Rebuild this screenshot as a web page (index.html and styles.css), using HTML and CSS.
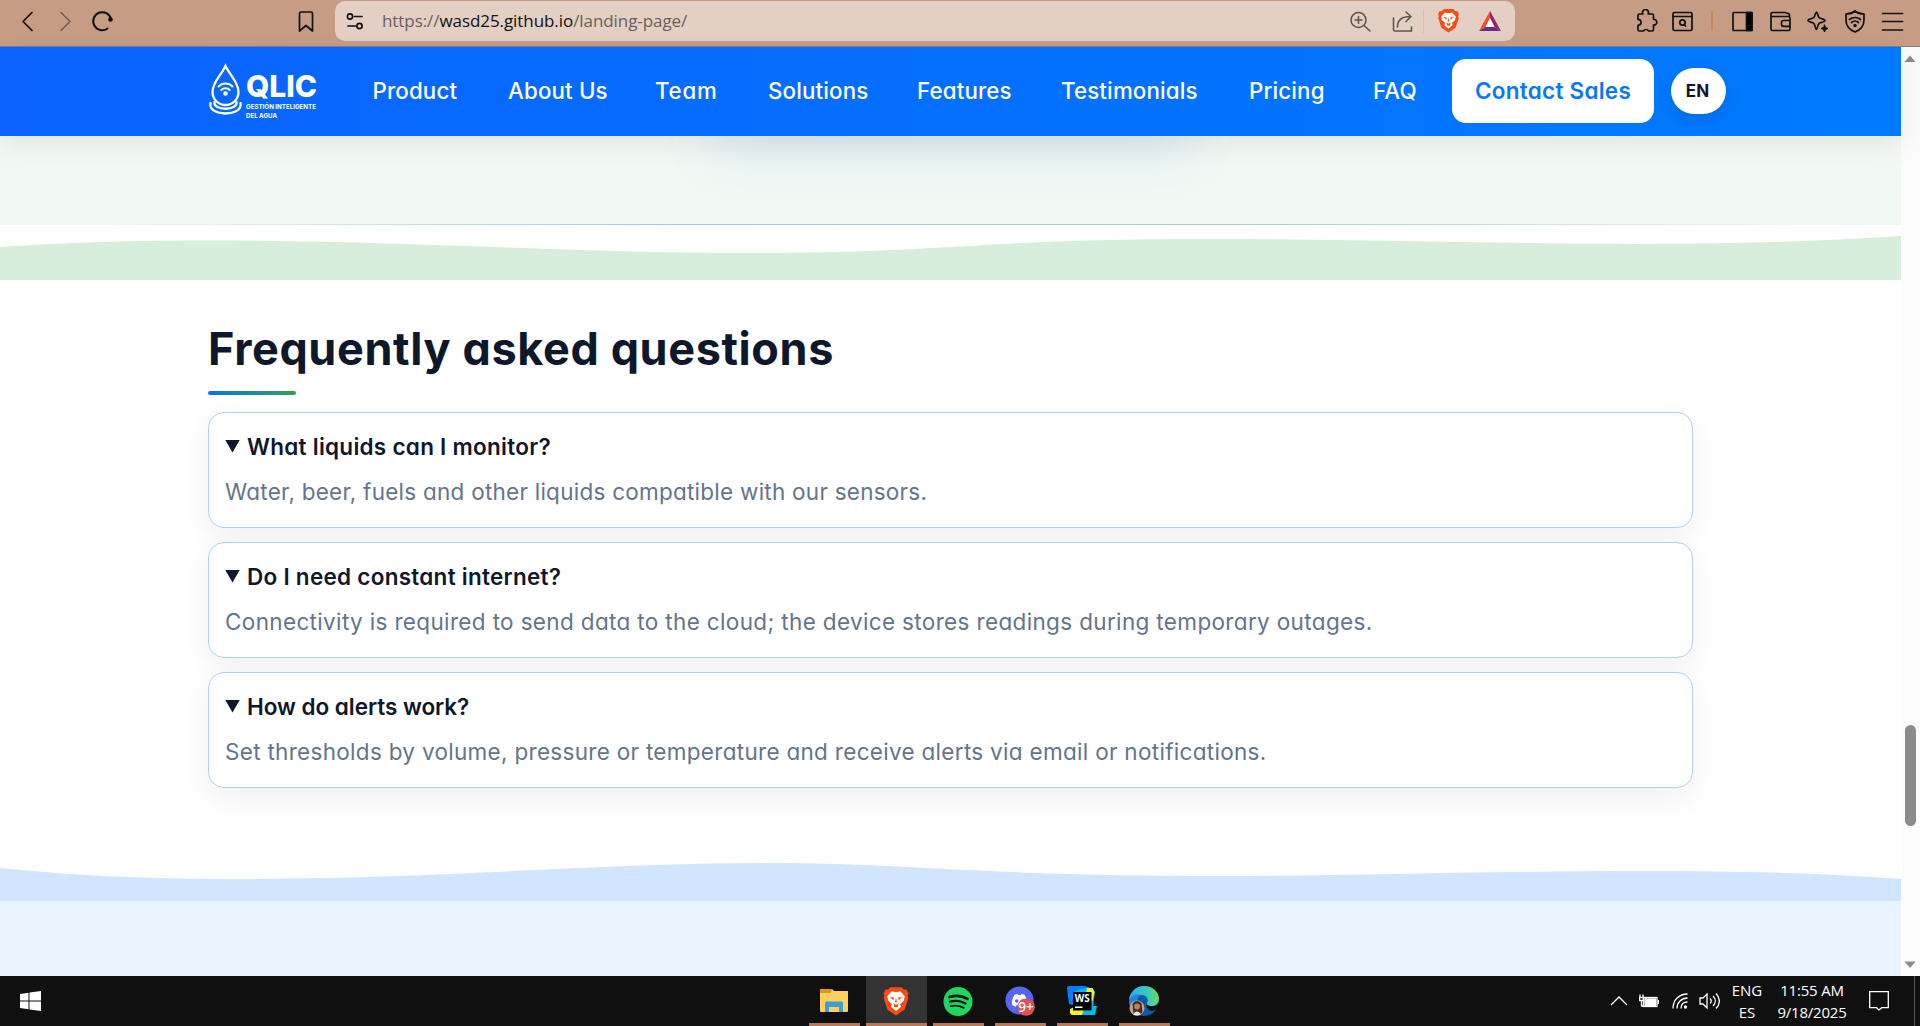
FILE: index.html
```html
<!DOCTYPE html>
<html lang="en">
<head>
<meta charset="utf-8">
<title>QLIC</title>
<link rel="stylesheet" href="styles.css">
</head>
<body>
<div class="toolbar">
  <svg class="ico back" viewBox="0 0 24 24"><path d="M17 3.500 8 12.500l9 9"/></svg>
  <svg class="ico forward" viewBox="0 0 24 24"><path d="m8 3.500 9 9-9 9"/></svg>
  <svg class="ico reload" viewBox="0 0 24 24"><path d="M17.500 19.500A9 9 0 1 1 21 10"/><circle cx="20.500" cy="10.500" r="2.300" fill="#111" stroke="none"/></svg>
  <svg class="ico bookmark" viewBox="0 0 24 24"><path d="M5.500 4.500a1.500 1.500 0 0 1 1.500-1.500h10a1.500 1.500 0 0 1 1.500 1.500V22L12 16.500 5.500 22z"/></svg>
  <div class="url">
    <svg class="ico tune" viewBox="0 0 24 24"><circle cx="7" cy="7.500" r="2.600"/><path d="M11.500 7.500H19M5 17h7.500"/><circle cx="16.500" cy="17" r="2.600"/></svg>
    <span class="address">https://<b>wasd25.github.io</b>/landing-page/</span>
    <svg class="ico soft zoom" viewBox="0 0 24 24"><circle cx="10.500" cy="11" r="7.500"/><path d="m16 16.500 6 5.500M7 11h7M10.500 7.500v7"/></svg>
    <svg class="ico soft share" viewBox="0 0 24 24"><path d="M3.500 9v11.500a1.500 1.500 0 0 0 1.500 1.500h16.500v-4M7.500 18c0-7 4-10.500 13-10.500M16 3l5 4.500-5 5"/></svg>
    <i class="bar"></i>
    <svg class="ico lion" viewBox="0 0 24 24"><use href="#brave"/></svg>
    <svg class="ico bat" viewBox="0 0 24 24"><path d="M12 2 1 22l6.500-4L12 9z" fill="#ff4724" stroke="none"/><path d="m12 2 11 20-6.500-4L12 9z" fill="#9e1f63" stroke="none"/><path d="M1 22h22l-6.500-4h-9z" fill="#662d91" stroke="none"/><path d="m12 9 4.500 9h-9z" fill="#fff" stroke="none"/></svg>
  </div>
  <div class="tools">
    <svg class="ico" viewBox="0 0 24 24"><path d="M4 6.500A1.500 1.500 0 0 1 5.500 5h3.400a3 3 0 1 1 5.200 0h3.900a1.500 1.500 0 0 1 1.500 1.500v4a2.800 2.800 0 1 1 0 5.500v4.500A1.500 1.500 0 0 1 18 22h-3.400a3 3 0 0 0-5.200 0H5.500A1.500 1.500 0 0 1 4 20.500V16.300a2.900 2.900 0 0 0 0-6z"/></svg>
    <svg class="ico" viewBox="0 0 24 24"><rect x="3" y="3.500" width="19" height="18" rx="1.500"/><path d="M3 7.500h19M15.500 17l-1.500-1.500"/><circle cx="12.500" cy="13.500" r="2.700"/></svg>
    <i class="divider"></i>
    <svg class="ico panel" viewBox="0 0 24 24"><rect x="3" y="3.500" width="19" height="18" rx="1"/><path d="M16.500 3.500H22v18h-5.500z" fill="#000"/></svg>
    <svg class="ico wallet" viewBox="0 0 24 24"><path d="M21.500 7.500V6a1.500 1.500 0 0 0-.7-1.200L17 3.500H4.500A1.500 1.500 0 0 0 3 5v15a1.500 1.500 0 0 0 1.500 1.500H20.500A1.500 1.500 0 0 0 22 20V9a1.500 1.500 0 0 0-1.500-1.500H3M22 11.500h-6.500a2 2 0 0 0-2 2v1.800a2 2 0 0 0 2 2H22"/></svg>
    <svg class="ico spark" viewBox="0 0 24 24"><path d="M11.500 3c1 0 1.200 4 2.500 5.500s6 1.500 6 3-4.500 1.700-6 3-1.500 6-2.500 6-1.300-4.500-2.600-6-6-1.500-6-3 4.700-1.500 6-3S10.500 3 11.500 3z"/><path d="m19.500 16 1 2.500 2.500 1-2.500 1-1 2.500-1-2.500-2.500-1 2.500-1z" fill="#111" stroke-width="1"/></svg>
    <svg class="ico shield" viewBox="0 0 24 24"><path d="M12 2c3 2.500 6 3 9 3v6c0 6-4 10-9 12-5-2-9-6-9-12V5c3 0 6-.5 9-3zM6.500 10.500c3-2.700 8-2.700 11 0M8.500 13.500c2-1.800 5-1.800 7 0"/><circle cx="12" cy="16.500" r=".9" fill="#111"/></svg>
    <svg class="ico menu" viewBox="0 0 24 24"><path d="M2.500 4.500h20M2.500 12.500h20M2.500 21h20"/></svg>
  </div>
</div>

<div class="viewport">
<div class="page">
  <header class="site-header">
    <svg class="logo" viewBox="0 0 112 62">
      <g fill="none" stroke="#fff" stroke-width="2.300" stroke-linecap="round">
        <path d="M17.500 4C13 13.500 4.500 20 4.500 30a13 13 0 0 0 26 0C30.500 20 22 13.500 17.500 4z"/>
        <path d="M10.500 24.500c3.500-4 10.500-4 14 0M13.300 28c2.200-2.300 6.200-2.300 8.400 0" stroke-width="2"/>
        <path d="M6.500 40c-2 9 24 9 22 0"/>
        <path d="M2.500 41c-3 14 33 14 30 0"/>
      </g>
      <circle cx="17.500" cy="31.500" r="2.300" fill="#fff"/>
      <text class="logo-name" x="38" y="34.500" textLength="71" lengthAdjust="spacingAndGlyphs">QLIC</text>
      <text class="logo-tag" x="38" y="47" textLength="70" lengthAdjust="spacingAndGlyphs">GESTIÓN INTELIGENTE</text>
      <text class="logo-tag" x="38" y="56" textLength="31" lengthAdjust="spacingAndGlyphs">DEL AGUA</text>
    </svg>
    <nav class="nav">
      <a>Product</a>
      <a>About Us</a>
      <a class="wide">Team</a>
      <a>Solutions</a>
      <a>Features</a>
      <a>Testimonials</a>
      <a>Pricing</a>
      <a>FAQ</a>
    </nav>
    <a class="cta">Contact Sales</a>
    <button class="lang">EN</button>
  </header>

  <section class="previous"><div class="glow"></div></section>
  <svg class="wave wave-green" viewBox="0 225 1901 55" preserveAspectRatio="none"><path d="M0 247C80 241.500 150 240.500 210 240.500c210 0 350 12.500 540 12.500 90 0 150-3 210-6.500C1040 241 1130 239 1200 239c150 0 300 5 440 5 100 0 170-2.500 261-8v44H0z"/></svg>

  <section class="faq">
    <h2>Frequently asked questions</h2>
    <div class="cards">
      <article class="card">
        <h3>What liquids can I monitor?</h3>
        <p>Water, beer, fuels and other liquids compatible with our sensors.</p>
      </article>
      <article class="card">
        <h3>Do I need constant internet?</h3>
        <p>Connectivity is required to send data to the cloud; the device stores readings during temporary outages.</p>
      </article>
      <article class="card">
        <h3>How do alerts work?</h3>
        <p>Set thresholds by volume, pressure or temperature and receive alerts via email or notifications.</p>
      </article>
    </div>
  </section>

  <svg class="wave wave-blue" viewBox="0 861 1901 40" preserveAspectRatio="none"><path d="M0 868c70 7 140 11 230 11 220 0 360-16 541-16 140 0 200 13 454 13 130 0 270-5 416-5 100 0 180 2 260 8v22H0z"/></svg>
  <section class="next"></section>
</div>
<div class="scrollbar">
  <svg viewBox="0 0 19 930"><path d="M9 8.500 14.500 15h-11zM9 921l5.500-6.500h-11z"/><rect x="4" y="678" width="11" height="101" rx="5.500"/></svg>
</div>
</div>

<footer class="taskbar">
  <svg class="start" viewBox="0 0 21 20"><path d="M0 3l8.500-1.300v7.800H0zM9.500 1.500 21 0v9.500H9.500zM0 10.500h8.500v7.800L0 17zM9.500 10.500H21V20L9.500 18.500z"/></svg>
  <div class="apps">
    <div class="app"><svg viewBox="0 0 30 30"><path d="M1 3h12l2 2h14v20a1 1 0 0 1-1 1H2a1 1 0 0 1-1-1z" fill="#fbd05e"/><path d="M1 3h12.500l-2 4H1z" fill="#dd9c0c"/><path d="M6 26V17a1.500 1.500 0 0 1 1.500-1.500h15A1.500 1.500 0 0 1 24 17v9h-4v-5h-10v5z" fill="#3f9ad8"/></svg></div>
    <div class="app active"><svg viewBox="0 0 24 24"><use href="#brave"/></svg></div>
    <div class="app"><svg viewBox="0 0 30 30"><circle cx="15" cy="15.500" r="14.500" fill="#1ed760"/><g fill="none" stroke="#111" stroke-linecap="round"><path d="M6.500 11c6-1.800 13-1.200 18 1.800" stroke-width="2.700"/><path d="M7 15.700c5-1.400 11-.8 15.500 1.700" stroke-width="2.300"/><path d="M7.700 20.200c4.500-1.100 9-.6 13 1.600" stroke-width="1.900"/></g></svg></div>
    <div class="app"><svg viewBox="0 0 32 32"><circle cx="15.500" cy="15.500" r="15" fill="#5865f2"/><path d="M10 9.500c1.200-.7 2.500-1 3.500-1l.6 1.200h2.800l.6-1.200c1 0 2.500.3 3.500 1 2 3.500 3 7 2.500 10.500-1.500 1.300-3 1.800-4 2l-1-1.800h-6l-1 1.800c-1-.2-2.500-.7-4-2-.5-3.500.5-7 2.500-10.500z" fill="#fff"/><circle cx="12.500" cy="16" r="1.900" fill="#5865f2"/><circle cx="18.500" cy="16" r="1.900" fill="#5865f2"/><circle cx="22.500" cy="22.500" r="9.300" fill="#e2504f"/><text x="22.500" y="27.500" class="count">9+</text></svg></div>
    <div class="app"><svg viewBox="0 0 30 30"><path d="M0 2a2 2 0 0 1 2-2h16l8 3v16H6L2 18z" fill="#087cfa"/><path d="M17 2h8l3 4-2 14h4l-2 9H13L8 24V5z" fill="#00b8e8"/><path d="M20 2h5.500l2 4-2 9H18zM3 23l6-3h9l-3 9H5.500A2.500 2.500 0 0 1 3 27z" fill="#f5ee32"/><path d="M6 6h18.500v18.500H6z" fill="#000"/><text x="15.300" y="15.500" class="ws">WS</text><path d="M8 20.500h7.500V22H8z" fill="#fff"/></svg></div>
    <div class="app"><svg viewBox="0 0 30 30"><defs><linearGradient id="edge" x1="0" x2="1"><stop offset="0" stop-color="#2fa9e8"/><stop offset=".55" stop-color="#36c7c9"/><stop offset="1" stop-color="#68dc56"/></linearGradient></defs><circle cx="15" cy="15" r="15" fill="#0c5aa6"/><path d="M0 14C1 6 7 0 15 0c9 0 15 6.500 15 12.500 0 5-4 7.500-7.500 7.500-3 0-5.500-1-5-2.500 3-3.500.5-8.500-5-8.500C6 9 1 12 0 14z" fill="url(#edge)"/><path d="M0 15c1.500-5 7-7.500 12-6-4 2-4.500 7-3 11l-4 5.500C2 23 0 19 0 15z" fill="#1b86dc"/><path d="M17.500 17.500c0 2.500 6 4 11 1.500l1.500-3v6l-6 3c-5-.5-8-4.500-6.500-7.500z" fill="#101010"/><circle cx="8" cy="22" r="7.500" fill="#c0a58f"/><path d="M3.500 18a5 5 0 0 1 9-.5l1 8-2 3.500-7-.5z" fill="#4a2c20"/><circle cx="8" cy="20.500" r="3" fill="#b87f5c"/><path d="M4 28.500c2-4 6-4 8 0-2 1.300-6 1.300-8 0z" fill="#efe8e2"/></svg></div>
  </div>
  <div class="tray">
    <svg class="caret" viewBox="0 0 18 12"><path d="M1 10 9 2l8 8"/></svg>
    <svg class="battery" viewBox="0 0 20 14"><rect x="4.500" y="3.500" width="13.500" height="9"/><path d="M6 5h10.500v6.500H6z" fill="#fff"/><path d="M19.300 6v4M1 .5v3M4 .5v3M.5 3.500h4v3h-4zM2.500 6v6h2"/></svg>
    <svg class="wifi" viewBox="0 0 16 16"><path d="M1 15.500C1 7 7 1 15.500 1M5 15.500C5 9.500 9.500 5 15.500 5M9 15.500c0-4 2.500-6.500 6.500-6.500"/><circle cx="13.500" cy="14" r="1.700" fill="#fff" stroke="none"/></svg>
    <svg class="volume" viewBox="0 0 21 18"><path d="M1 6h3l4-4v14l-4-4H1zM11 6.500c1.500 1.500 1.500 3.500 0 5M14 4c3 3 3 7 0 10M17 1.500c4.500 4.500 4.500 10.500 0 15"/></svg>
    <div class="langs"><span>ENG</span><span>ES</span></div>
    <div class="clock"><span>11:55 AM</span><span>9/18/2025</span></div>
    <svg class="notice" viewBox="0 0 20 20"><path d="M.7.700h18.600v16h-6.500L10 19l-2.500-2.300H.700z"/></svg>
    <i class="peek"></i>
  </div>
</footer>

<svg width="0" height="0" class="defs"><symbol id="brave" viewBox="0 0 24 24"><path d="M7.500 1h9l2 2 2-.2 1.500 3-.7 2 .5 2-3 9.200L12 23.500 5.200 19l-3-9.200.5-2L2 5.800l1.500-3 2 .2z" fill="#fb4a13" stroke="none"/><path d="M12 5l3.500-.8 3.500 4-.7 3.300-3 3 .7 2L12 20l-4-3.500.7-2-3-3L5 8.200l3.500-4z" fill="#fff" stroke="none"/><path d="M7 8.500l3.500.8-.8 2zM17 8.500l-3.500.8.8 2zM10 14l2 1 2-1-.5 2.500L12 17l-1.500-.5zM12 9l.8 4h-1.600z" fill="#fb4a13" stroke="none"/></symbol></svg>
</body>
</html>
```
FILE: styles.css
```css
* { box-sizing: border-box; }
body { margin: 0; width: 1920px; height: 1026px; overflow: hidden; display: flex; flex-direction: column; font-family: Inter, "Open Sans", sans-serif; font-feature-settings: "cv11"; color: #0f172a; background: #fff; }
svg { display: block; flex: none; }
.defs { position: absolute; }

/* Browser toolbar */
.toolbar { height: 47px; flex: none; display: flex; align-items: center; padding: 0 16px 5px 15px; background: #c69c85; border-bottom: 1px solid #8b7a7c; }
.ico { width: 24px; height: 24px; fill: none; stroke: #111; stroke-width: 1.7; stroke-linejoin: round; stroke-linecap: round; }
.forward { margin-left: 14px; stroke: #7b6052; }
.reload { margin-left: 13px; stroke-width: 2; }
.bookmark { margin-left: 180px; }
.url { width: 1180px; height: 40px; margin-left: 17px; padding: 0 13px 0 8px; display: flex; align-items: center; background: #e3cfc4; border-radius: 10px; }
.address { margin-left: 15px; flex: 1; font: 17px "Open Sans", sans-serif; letter-spacing: -.07px; color: #6b5f59; }
.address b { font-weight: 400; color: #111; }
.soft { stroke: #5f5550; stroke-width: 1.6; }
.share { margin-left: 18px; }
.bar { width: 1px; height: 24px; margin: 0 12px 0 9px; background: #cdbfba; }
.lion { width: 25px; height: 25px; }
.bat { margin-left: 17px; }
.tools { margin-left: auto; display: flex; align-items: center; width: 270px; }
.tools .ico + .ico { margin-left: 12px; }
.divider { width: 2px; height: 20px; margin: 0 17px; background: #c28953; }
.tools .wallet.ico { margin-left: 14px; }
.tools .spark.ico, .tools .menu.ico { margin-left: 13px; }
.tools .shield.ico { margin-left: 14px; }

/* Page and scrollbar */
.viewport { height: 929px; flex: none; display: flex; }
.page { width: 1901px; display: flex; flex-direction: column; }
.scrollbar { width: 19px; background: #fcfcfc; }
.scrollbar svg { width: 19px; height: 930px; fill: #8b8b8b; }

.site-header { position: relative; height: 89px; flex: none; display: flex; align-items: center; padding: 0 0 2px 208px; background: linear-gradient(90deg, #0a63ff, #007bff); box-shadow: 0 8px 30px rgba(2, 6, 23, .08); }
.logo { width: 112px; height: 62px; margin-top: 4px; overflow: visible; }
.logo-name { font: 800 30px Inter, sans-serif; fill: #fff; }
.logo-tag { font: 700 6.800px Inter, sans-serif; fill: #fff; }
.nav { display: grid; grid-template-columns: 135.500px 147px 113px 149px 144px 188px 124px 79px; margin-left: 52.500px; white-space: nowrap; font-size: 22.300px; letter-spacing: .15px; font-weight: 500; color: #fff; }
.nav .wide { letter-spacing: .8px; }
.cta { width: 202px; height: 64px; display: grid; place-items: center; white-space: nowrap; background: #fff; border-radius: 14px; color: #0a78f5; font-size: 22.500px; letter-spacing: .250px; font-weight: 600; }
.lang { width: 55px; height: 46px; margin-left: 17px; border: 0; padding: 0 2px 0 0; border-radius: 23px; background: #fff; color: #0f172a; font: 700 17px Inter, sans-serif; box-shadow: 0 6px 16px rgba(2, 6, 23, .12); }

.previous { height: 89px; flex: none; overflow: hidden; display: flex; justify-content: center; background: linear-gradient(#f3f8f4, #f0f9f4); border-bottom: 1px solid; border-image: linear-gradient(90deg, #f0f9f4 5%, #9cc6ec 37%, #aad4bf 68%, #f0f9f4 95%) 1; }
.glow { width: 470px; height: 40px; margin-top: -42px; box-shadow: 0 12px 55px rgba(60, 150, 225, .2); }
.wave { width: 1901px; flex: none; }
.wave-green { height: 55px; fill: #d7eedd; }
.wave-blue { height: 40px; fill: #d1e6fe; }

/* FAQ */
.faq { height: 581px; flex: none; padding: 40px 208px 0; }
h2 { margin: 0; height: 75px; line-height: 58px; font-size: 45px; letter-spacing: .61px; font-weight: 700; white-space: nowrap; }
h2::after { content: ""; display: block; width: 88px; height: 4px; margin-top: 13px; border-radius: 2px; background: linear-gradient(90deg, #0a74e8, #34a05a); }
.cards { display: grid; gap: 14px; margin-top: 17px; }
.card { height: 116px; padding: 16px 17px 0 16px; border: 1px solid #b0d1f2; border-radius: 16px; background: #fff; box-shadow: 0 10px 30px rgba(2, 6, 23, .06); white-space: nowrap; }
.card h3 { margin: 0; display: flex; align-items: center; height: 34px; font-size: 22.500px; letter-spacing: .27px; font-weight: 600; }
.card:last-child h3 { letter-spacing: -.04px; }
.card h3::before { content: ""; width: 15px; height: 13px; margin-right: 7px; background: #0f172a; clip-path: polygon(0 0, 100% 0, 50% 100%); }
.card p { margin: 12px 0 0; height: 34px; line-height: 34px; font-size: 22.500px; letter-spacing: .3px; color: #64748b; }
.card:first-child p { letter-spacing: .25px; }
.card:nth-child(2) p { letter-spacing: .35px; }
.next { flex: 1; background: #e9f4fe; }

/* Windows taskbar */
.taskbar { height: 50px; flex: none; display: flex; align-items: center; padding-left: 20px; background: #101010; color: #fff; }
.start { width: 21px; height: 20px; fill: #fff; }
.apps { display: flex; margin-left: 768px; gap: 11px; height: 50px; }
.app { width: 51px; height: 50px; padding-right: 2px; display: grid; place-items: center; border-bottom: 3px solid #b4785c; }
.app svg { width: 30px; height: 30px; margin-top: 3px; }
.app.active { width: 61px; margin: 0 -5px; background: #333; }
.count { font: 600 14.500px "Open Sans", sans-serif; fill: #fff; text-anchor: middle; }
.ws { font: 700 9.800px "Open Sans", sans-serif; fill: #fff; text-anchor: middle; }
.tray { margin-left: auto; display: flex; align-items: center; height: 50px; font: 15px "Open Sans", sans-serif; }
.tray svg { fill: none; stroke: #fff; stroke-width: 1.300; }
.caret { width: 18px; height: 12px; }
.battery { width: 20px; height: 14px; margin-left: 11px; }
.wifi { width: 16px; height: 16px; margin-left: 13px; }
.volume { width: 21px; height: 18px; margin-left: 11px; }
.langs, .clock { display: grid; line-height: 22.500px; text-align: center; white-space: nowrap; }
.langs { width: 32px; margin-left: 11px; }
.clock { width: 72px; margin-left: 13px; letter-spacing: -.2px; }
.notice { width: 20px; height: 20px; margin-left: 21px; }
.peek { width: 1px; height: 50px; margin: 0 5px 0 25px; background: #555; }
```
